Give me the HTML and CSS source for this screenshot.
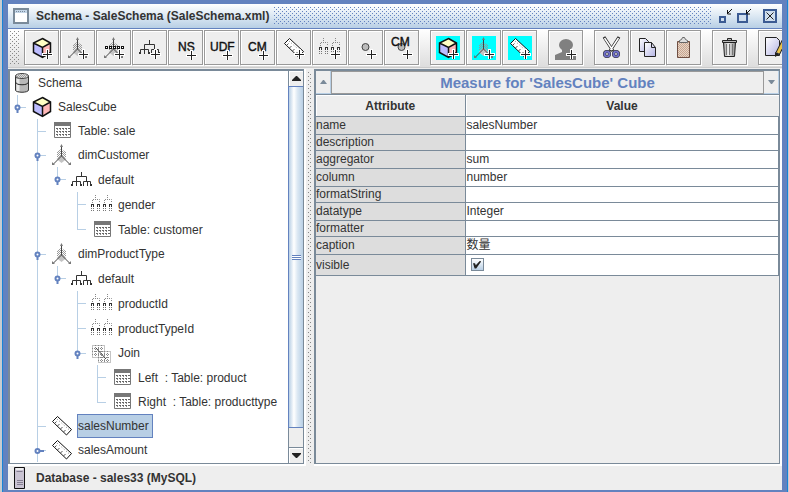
FILE: index.html
```html
<!DOCTYPE html>
<html lang="en">
<head>
<meta charset="utf-8">
<title>Schema - SaleSchema (SaleSchema.xml)</title>
<link rel="stylesheet" href="styles.css">
</head>
<body>
<svg class="defs" aria-hidden="true">
  <defs>
    <pattern id="dither" width="2" height="2" patternUnits="userSpaceOnUse"><path d="M0 0h1v1H0zM1 1h1v1H1z" fill="#999"/></pattern>
    <pattern id="dither-brown" width="2" height="2" patternUnits="userSpaceOnUse"><rect width="2" height="2" fill="#e6d5c8"/><path d="M0 0h1v1H0zM1 1h1v1H1z" fill="#c9a58e"/></pattern>
    <pattern id="bumps" width="4" height="4" patternUnits="userSpaceOnUse"><path d="M0 0h1v1H0zM2 2h1v1H2z" fill="#6382bf"/></pattern>
    <linearGradient id="steel"><stop offset="0" stop-color="#999"/><stop offset=".4" stop-color="#eee"/><stop offset="1" stop-color="#888"/></linearGradient>
    <linearGradient id="sheet" x2="1" y2="1"><stop offset="0" stop-color="#fff"/><stop offset="1" stop-color="#b4b4e4"/></linearGradient>
  </defs>
  <symbol id="plus" viewBox="0 0 24 24"><path d="M17.5 13v10M12 18.5h11" stroke="#fff" stroke-width="3"/><path d="M17.5 14v9M13 18.5h9" stroke="#222"/></symbol>
  <symbol id="cube" viewBox="0 0 24 24">
    <path d="M12.500 2.500 20.500 7 12.500 11.500 3.500 7z" fill="#ffffc4"/><path d="M3.500 7 12.500 11.500V21.500L3.500 16.500z" fill="#bcbcff"/><path d="M20.500 7 12.500 11.500V21.500L20.500 16.500z" fill="#ffb8b8"/>
    <path d="M12.500 2.500 20.500 7V16.500L12.500 21.500 3.500 16.500V7zM3.500 7 12.500 11.500 20.500 7M12.500 11.500V21" fill="none" stroke="#111" stroke-width="1.500"/>
  </symbol>
  <symbol id="dim" viewBox="0 0 24 24">
    <path d="M8 8l3-2 5 3v6H7V9z" fill="url(#dither)"/><path d="M11.500 12l5 4-5 4-5-4z" fill="#c4c4c4"/>
    <path d="M11.500 2v11M11.500 13l-8 8M11.500 13l8 8" fill="none" stroke="#444"/>
    <path d="M10 4l1.500-3L13 4zM2 19v3h3zM21 19v3h-3z" fill="#777"/>
  </symbol>
  <symbol id="hier" viewBox="0 0 24 24"><path d="M11.500 4v4M6.500 13V8.500h10V13M2.500 17v-3.500h8V17M6.500 13v4M13.500 17v-3.500h7V17M17.500 13v4" fill="none" stroke="#333"/><path d="M1 16h2v2H1zM6 16h1v2H6zM10 16h2v2h-2zM13 16h1v2h-1zM17 16h1v2h-1zM20 16h2v2h-2z" fill="#333"/></symbol>
  <symbol id="level" viewBox="0 0 24 24">
    <path d="M5.500 2v4M2.500 10V6.500h7V10M17.500 2v4M14.500 10V6.500h7V10" fill="none" stroke="#888" stroke-dasharray="1 1"/>
    <path d="M1.500 13v5M3.500 13v5M7.500 13v5M9.500 13v5M13.500 13v5M15.500 13v5M19.500 13v5M21.500 13v5" stroke="#777" stroke-dasharray="1 1"/>
    <path d="M1 11h3v3H1zM7 11h3v3H7zM13 11h3v3h-3zM19 11h3v3h-3z" fill="#333"/><path d="M2 12h1v2H2zM8 12h1v2H8zM14 12h1v2h-1zM20 12h1v2h-1z" fill="#fff"/>
  </symbol>
  <symbol id="ruler" viewBox="0 0 24 24"><path d="M7.500 2.500 21.500 15.500 16.500 21 2.500 7.500z" fill="#fff" stroke="#111"/><path d="M7 5l12.500 11" stroke="#888" stroke-dasharray="1 2"/><path d="M4.500 9.500l2-2M7.500 12l2-2M10.500 15l2-2M13.500 18l2-2" stroke="#555"/></symbol>
  <symbol id="grid" viewBox="0 0 24 24"><path d="M4.500 3.500h16v15h-16z" fill="#fff" stroke="#777"/><path d="M4 3h17v4H4z" fill="#777"/><path d="M6 9.500h14M6 12.500h14M6 15.500h14" stroke="#666" stroke-dasharray="2 1"/><path d="M7 10.500h12M7 13.500h12M7 16.500h12" stroke="#888" stroke-dasharray="1 2"/></symbol>
  <symbol id="join" viewBox="0 0 24 24"><path d="M2.500 4.500h12v12h-12zM5.500 4v12M8.500 4v12M11.500 4v12M2 7.500h12M2 10.500h12M2 13.500h12M8.500 10.500h12v11h-12zM11.500 10v12M14.500 10v12M17.500 10v12M8 13.500h12M8 16.500h12M8 19.500h12" fill="none" stroke="#888" stroke-dasharray="1 1"/><path d="M6 7l10 11" stroke="#444"/></symbol>
  <symbol id="database" viewBox="0 0 24 24"><path d="M5.500 5v14c0 3 13 3 13 0V5z" fill="#b8b8b8" stroke="#333"/><path d="M8 8v12" stroke="#e8e8e8" stroke-width="3"/><ellipse cx="12" cy="5" rx="6.500" ry="2.500" fill="#ddd" stroke="#444"/><ellipse cx="12" cy="5" rx="6" ry="2" fill="url(#dither)"/><path d="M6 11.500c0 3 12 3 12 0" fill="none" stroke="#222"/></symbol>
  <symbol id="ball" viewBox="0 0 24 24"><circle cx="11.500" cy="11" r="3.500" fill="#bbb" stroke="#444"/></symbol>
  <symbol id="open" viewBox="0 0 9 9"><path d="M4.500 4v5" stroke="#6382bf" stroke-width="2"/><circle cx="4.500" cy="3.500" r="2" fill="#fff" stroke="#6382bf" stroke-width="2"/></symbol>
  <symbol id="closed" viewBox="0 0 11 9"><path d="M4 4h6" stroke="#6382bf" stroke-width="2"/><circle cx="3.500" cy="4" r="2" fill="#fff" stroke="#6382bf" stroke-width="2"/></symbol>
</svg>

<div class="window">
  <header class="titlebar">
    <svg class="app-icon" viewBox="0 0 16 16"><rect x="1" y="1" width="14" height="14" fill="#fff" stroke="#7a8a99" stroke-width="2"/><path d="M2 2h12v3H2z" fill="#c4d6e8"/><path d="M3 3.500h10" stroke="#7a8a99" stroke-dasharray="1 1"/></svg>
    <h1>Schema - SaleSchema (SaleSchema.xml)</h1>
    <svg class="title-bumps" aria-hidden="true"><rect width="100%" height="100%" fill="url(#bumps)"/></svg>
    <div class="window-controls">
      <button aria-label="Minimize"><svg viewBox="0 0 16 16"><path d="M3 9h5v5H3z" fill="#cfdeee" stroke="#3b5b93" stroke-width="2"/><path d="M15 1L10.500 5.500M10.500 2v4H14" fill="none" stroke="#111"/></svg></button>
      <button aria-label="Maximize"><svg viewBox="0 0 16 16"><path d="M2 6h9v8H2z" fill="#cfdeee" stroke="#3b5b93" stroke-width="2"/><path d="M15 1L10.500 5.500M10.500 2v4H14" fill="none" stroke="#111"/></svg></button>
      <button class="close" aria-label="Close"><svg viewBox="0 0 16 16"><path d="M2 2h12v12H2z" fill="#cfdeee" stroke="#3b5b93" stroke-width="2"/><path d="M4.500 4.500l7 7M11.500 4.500l-7 7" stroke="#222"/></svg></button>
    </div>
  </header>

  <div class="toolbar" role="toolbar">
    <span class="grip"></span>
    <div class="group">
      <button aria-label="Add cube"><svg viewBox="0 0 24 24"><use href="#cube"/><use href="#plus"/></svg></button>
      <button aria-label="Add dimension"><svg viewBox="0 0 24 24"><use href="#dim"/><use href="#plus"/></svg></button>
      <button aria-label="Add dimension usage"><svg viewBox="0 0 24 24"><use href="#dim"/><path d="M3 11.500h19" stroke="#111" stroke-width="3" stroke-dasharray="3 1"/><path d="M4 11.500h17" stroke="#fff" stroke-dasharray="1 3"/><use href="#plus"/></svg></button>
      <button aria-label="Add hierarchy"><svg viewBox="0 0 24 24"><use href="#hier"/><use href="#plus"/></svg></button>
      <button aria-label="Add named set"><svg viewBox="0 0 24 24"><text x="4" y="15">NS</text><use href="#plus" y="1"/></svg></button>
      <button aria-label="Add user defined function"><svg viewBox="0 0 24 24"><text x="0" y="15">UDF</text><use href="#plus" y="1"/></svg></button>
      <button aria-label="Add calculated member"><svg viewBox="0 0 24 24"><text x="2" y="15">CM</text><use href="#plus" y="1"/></svg></button>
      <button aria-label="Add measure"><svg viewBox="0 0 24 24"><use href="#ruler"/><use href="#plus"/></svg></button>
      <button aria-label="Add level"><svg viewBox="0 0 24 24"><use href="#level"/><use href="#plus"/></svg></button>
      <button aria-label="Add property"><svg viewBox="0 0 24 24"><use href="#ball"/><use href="#plus"/></svg></button>
      <button aria-label="Add calculated member property"><svg viewBox="0 0 24 24"><use href="#ball"/><text x="1" y="10">CM</text><use href="#plus"/></svg></button>
    </div>
    <div class="group">
      <button class="virtual" aria-label="Add virtual cube"><svg viewBox="0 0 24 24"><use href="#cube"/><use href="#plus"/></svg></button>
      <button class="virtual" aria-label="Add virtual dimension"><svg viewBox="0 0 24 24"><use href="#dim"/><use href="#plus"/></svg></button>
      <button class="virtual" aria-label="Add virtual measure"><svg viewBox="0 0 24 24"><use href="#ruler"/><use href="#plus"/></svg></button>
    </div>
    <div class="group">
      <button aria-label="Add role"><svg viewBox="0 0 24 24"><path d="M8 13h8v3l6 2v6H1v-5l7-3z" fill="#808080"/><ellipse cx="12" cy="9" rx="7" ry="6" fill="#808080"/><use href="#plus"/></svg></button>
    </div>
    <div class="group">
      <button aria-label="Cut"><svg viewBox="0 0 24 24"><path d="M4 1l9 14M19 1l-9 14" stroke="#222" stroke-width="3"/><path d="M4.500 2l8 12M18.500 2l-8 12" stroke="#fff" stroke-width="1.500"/><circle cx="7" cy="18" r="2.500" fill="#ddd" stroke="#222" stroke-width="3"/><circle cx="16" cy="18" r="2.500" fill="#ddd" stroke="#222" stroke-width="3"/><circle cx="7" cy="18" r="2.500" fill="none" stroke="#7070c8" stroke-width="2"/><circle cx="16" cy="18" r="2.500" fill="none" stroke="#7070c8" stroke-width="2"/></svg></button>
      <button aria-label="Copy"><svg viewBox="0 0 24 24"><path d="M3.500 2.500h6l3 3v10h-9z" fill="url(#sheet)" stroke="#222"/><path d="M8.500 6.500h7l4 5v9h-11z" fill="url(#sheet)" stroke="#222"/><path d="M15.500 6.500v5h4" fill="none" stroke="#222"/></svg></button>
      <button aria-label="Paste"><svg viewBox="0 0 24 24"><path d="M5.500 5.500h12v16h-12z" fill="url(#dither-brown)" stroke="#6f4f42"/><path d="M7.500 6.500v-2l2-1 1-2h2l1 2 2 1v2z" fill="#ddd" stroke="#666"/></svg></button>
    </div>
    <div class="group">
      <button aria-label="Delete"><svg viewBox="0 0 24 24"><path d="M5.500 6.500h12l-1 14h-10z" fill="url(#steel)" stroke="#222"/><path d="M8.500 8v11M11.500 8v11M14.500 8v11" stroke="#777"/><path d="M4.500 4.500h14v2h-14zM9.500 4V2.500h4V4" fill="#bbb" stroke="#222"/></svg></button>
    </div>
    <div class="group">
      <button aria-label="Edit"><svg viewBox="0 0 24 24"><path d="M1.500 1.500h11l3 3v15h-14z" fill="url(#sheet)" stroke="#222"/><path d="M20 5L14 17" stroke="#222" stroke-width="5"/><path d="M20 5L14 17" stroke="#e8c24a" stroke-width="3"/><path d="M11 16l5 2-5 3z" fill="#222"/><path d="M18 4l4 2 1-3-3-1z" fill="#c44"/></svg></button>
    </div>
  </div>

  <main class="split">
    <section class="tree-pane">
      <ul class="tree">
        <li><div class="row"><svg class="icon"><use href="#database"/></svg><span class="label">Schema</span></div>
          <ul>
            <li><div class="row"><svg class="handle"><use href="#open"/></svg><svg class="icon"><use href="#cube"/></svg><span class="label">SalesCube</span></div>
              <ul>
                <li><div class="row"><svg class="icon"><use href="#grid"/></svg><span class="label">Table: sale</span></div></li>
                <li><div class="row"><svg class="handle"><use href="#open"/></svg><svg class="icon"><use href="#dim"/></svg><span class="label">dimCustomer</span></div>
                  <ul>
                    <li><div class="row tall"><svg class="handle"><use href="#open"/></svg><svg class="icon"><use href="#hier"/></svg><span class="label">default</span></div>
                      <ul>
                        <li><div class="row tall"><svg class="icon"><use href="#level"/></svg><span class="label">gender</span></div></li>
                        <li><div class="row tall"><svg class="icon"><use href="#grid"/></svg><span class="label">Table: customer</span></div></li>
                      </ul>
                    </li>
                  </ul>
                </li>
                <li><div class="row"><svg class="handle"><use href="#open"/></svg><svg class="icon"><use href="#dim"/></svg><span class="label">dimProductType</span></div>
                  <ul>
                    <li><div class="row tall"><svg class="handle"><use href="#open"/></svg><svg class="icon"><use href="#hier"/></svg><span class="label">default</span></div>
                      <ul>
                        <li><div class="row tall"><svg class="icon"><use href="#level"/></svg><span class="label">productId</span></div></li>
                        <li><div class="row tall"><svg class="icon"><use href="#level"/></svg><span class="label">productTypeId</span></div></li>
                        <li><div class="row"><svg class="handle"><use href="#open"/></svg><svg class="icon"><use href="#join"/></svg><span class="label">Join</span></div>
                          <ul>
                            <li><div class="row tall"><svg class="icon"><use href="#grid"/></svg><span class="label">Left&nbsp; : Table: product</span></div></li>
                            <li><div class="row"><svg class="icon"><use href="#grid"/></svg><span class="label">Right&nbsp; : Table: producttype</span></div></li>
                          </ul>
                        </li>
                      </ul>
                    </li>
                  </ul>
                </li>
                <li><div class="row"><svg class="icon"><use href="#ruler"/></svg><span class="label selected">salesNumber</span></div></li>
                <li class="more"><div class="row"><svg class="handle side"><use href="#closed"/></svg><svg class="icon"><use href="#ruler"/></svg><span class="label">salesAmount</span></div></li>
              </ul>
            </li>
          </ul>
        </li>
      </ul>
      <div class="scrollbar">
        <button class="arrow" aria-label="Scroll up"><svg viewBox="0 0 9 5"><path d="M4 0h1l4 4v1H0V4z"/></svg></button>
        <div class="thumb"><span></span></div>
        <div class="track"></div>
        <button class="arrow" aria-label="Scroll down"><svg viewBox="0 0 9 5"><path d="M0 0h9v1L5 5H4L0 1z"/></svg></button>
      </div>
    </section>
    <div class="divider"></div>
    <section class="detail-pane">
      <div class="detail-head">
        <button class="step" aria-label="Previous"><svg viewBox="0 0 7 4"><path d="M3 0h1l3 4H0z"/></svg></button>
        <button class="detail-title">Measure for 'SalesCube' Cube</button>
        <button class="step" aria-label="Next"><svg viewBox="0 0 7 4"><path d="M0 0h7L4 4H3z"/></svg></button>
      </div>
      <table>
        <thead><tr><th scope="col">Attribute</th><th scope="col">Value</th></tr></thead>
        <tbody>
          <tr><td>name</td><td>salesNumber</td></tr>
          <tr class="low"><td>description</td><td></td></tr>
          <tr><td>aggregator</td><td>sum</td></tr>
          <tr><td>column</td><td>number</td></tr>
          <tr class="low"><td>formatString</td><td></td></tr>
          <tr><td>datatype</td><td>Integer</td></tr>
          <tr class="low"><td>formatter</td><td></td></tr>
          <tr><td>caption</td><td>数量</td></tr>
          <tr class="check"><td><label for="visible">visible</label></td><td><input type="checkbox" id="visible" checked></td></tr>
        </tbody>
      </table>
    </section>
  </main>

  <footer class="status">
    <svg viewBox="0 0 11 22"><path d="M.5.5h10v21H.5z" fill="#c9c3d2" stroke="#111"/><path d="M2 1h7v2H2z" fill="#eee"/><path d="M2.500 4.500h6M3 13.500h6M3 15.500h6M3 17.500h6" stroke="#857f92"/></svg>
    <span>Database - sales33 (MySQL)</span>
  </footer>
</div>
</body>
</html>
```
FILE: styles.css
```css
* { box-sizing: border-box; }

:root {
  --frame: #6382bf;
  --line: #7a8a99;
  --panel: #eee;
  --select: #b8cfe5;
  --dot: conic-gradient(at 1px 1px, transparent 75%, #888 0);
}

body {
  margin: 0;
  height: 100vh;
  padding: 0 1px 0 2px;
  overflow: hidden;
  background: #c8ccd0;
  color: #333;
  font: 12px/14px "Liberation Sans", "Noto Sans CJK SC", sans-serif;
}

button { margin: 0; padding: 0; border: 0; background: none; font: inherit; color: inherit; }
svg { display: block; flex: none; }
ul { list-style: none; margin: 0; padding: 0; }
.defs { position: absolute; width: 0; height: 0; }

.window {
  height: 100%;
  display: flex;
  flex-direction: column;
  padding: 4px 5px 2px;
  border: solid #1883d7;
  border-width: 0 1px;
  background: var(--frame);
}

/* Title bar */
.titlebar {
  flex: none;
  display: flex;
  align-items: center;
  height: 24px;
  padding: 0 4px 0 5px;
  background: linear-gradient(#fff, #dce8f3 50%, #b8cfe5);
}
.app-icon { width: 16px; height: 16px; }
.titlebar h1 { margin: 0 5px 0 7px; font-size: 12px; white-space: nowrap; }
.title-bumps { flex: 1; min-width: 0; height: 18px; }
.window-controls { display: flex; gap: 3px; margin-left: 5px; }
.window-controls svg { width: 16px; height: 16px; }
.window-controls .close { margin-left: 7px; }

/* Toolbar */
.toolbar {
  flex: none;
  display: flex;
  gap: 11px;
  height: 39px;
  margin-top: 1px;
  padding-top: 1px;
  overflow: hidden;
  border-bottom: 1px solid #ccc;
  background: linear-gradient(#fff, #ddd);
}
.grip {
  flex: none;
  width: 10px;
  margin: 1px -7px 3px 2px;
  background: var(--dot) 0 0 / 4px 4px, var(--dot) 2px 2px / 4px 4px;
}
.group { flex: none; display: flex; gap: 1px; }
.group button {
  width: 35px;
  height: 35px;
  padding: 5px 4px 4px 5px;
  border: 1px solid #999;
  background: var(--panel);
  box-shadow: inset 1px 1px #fff, 1px 1px #fff;
}
.group svg { width: 24px; height: 24px; overflow: visible; }
.group text { font-size: 12px; fill: #111; stroke: #111; stroke-width: 0.4px; }
.virtual svg { background: #0ff; }

/* Split area */
.split { flex: 1; min-height: 0; display: flex; padding-top: 1px; background: var(--panel); }
.tree-pane {
  flex: none;
  width: 298px;
  display: flex;
  overflow: hidden;
  border: solid #fff;
  border-width: 0 2px 2px 0;
  box-shadow: inset 2px 2px var(--line), inset -1px -1px var(--line);
}
.tree { flex: 1; min-width: 0; margin: 2px 0 1px 2px; overflow: hidden; background: #fff; }
.tree ul { padding-left: 20px; }
.tree li { position: relative; }
.row { display: flex; align-items: center; gap: 3px; height: 24px; position: relative; }
.row.tall { height: 25px; }
.icon { width: 24px; height: 24px; }
.label { padding: 4px 3px 4px 0; border: 1px solid transparent; white-space: nowrap; }
.label.selected { border-color: var(--frame); background: var(--select); }

/* Guide lines joining a node to its siblings */
.tree ul > li::before {
  content: "";
  position: absolute;
  left: -13px;
  top: 0;
  height: 100%;
  border-left: 1px solid var(--select);
}
.tree ul > li:last-child::before { height: 13px; }
.tree ul > li.more::before { height: 100%; }
.tree ul > li::after {
  content: "";
  position: absolute;
  left: -12px;
  top: 12px;
  width: 8px;
  border-top: 1px solid var(--select);
}
.handle { position: absolute; z-index: 1; left: -17px; top: 9px; width: 9px; height: 9px; }
.handle.side { width: 11px; left: -16px; }

/* Scroll bar */
.scrollbar {
  flex: none;
  display: flex;
  flex-direction: column;
  width: 16px;
  margin: 2px 0 1px;
  border: solid var(--line);
  border-width: 0 1px;
  background: var(--panel);
}
.arrow { display: grid; place-items: center; height: 15px; box-shadow: inset 1px 1px #fff; }
.arrow svg { width: 9px; height: 5px; fill: #222; }
.thumb {
  flex: 1;
  display: grid;
  place-items: center;
  border: solid var(--frame);
  border-width: 1px 0 1px 1px;
  margin-left: -1px;
  background: linear-gradient(90deg, #b8cfe5, #fff 35%, #dce8f3 60%, #b8cfe5);
}
.thumb span { width: 9px; height: 5px; background: repeating-linear-gradient(var(--frame) 0 1px, #fff 1px 2px); }
.track { height: 20px; border-bottom: 1px solid var(--line); }

.divider {
  flex: none;
  width: 4px;
  margin: 3px 2px;
  background: var(--dot) 0 0 / 4px 4px, var(--dot) 2px 2px / 4px 4px;
}

/* Detail pane */
.detail-pane {
  flex: 1;
  min-width: 0;
  border: solid #fff;
  border-width: 0 2px 2px 0;
  box-shadow: inset 2px 2px var(--line), inset -1px -1px var(--line);
  padding: 2px 1px 1px 2px;
}
.detail-head { display: flex; height: 23px; background: #fff; }
.step { display: grid; place-items: center; width: 15px; background: var(--panel); border: solid var(--select); border-width: 0 1px 1px 0; }
.step svg { width: 7px; height: 4px; fill: var(--line); }
.detail-title {
  flex: 1;
  border: 1px solid #999;
  background: var(--panel);
  color: var(--frame);
  font-size: 15px;
  font-weight: bold;
}
table { width: 100%; border-collapse: collapse; table-layout: fixed; border-top: 1px solid var(--line); }
th { height: 22px; padding: 0; border-bottom: 1px solid var(--line); box-shadow: inset 1px 1px #fff; }
th:first-child { width: 149px; border-right: 1px solid var(--line); }
td { height: 18px; padding: 0; line-height: 16px; vertical-align: top; background: #fff; border: 1px solid var(--line); border-left: 0; }
td:first-child { background: #ddd; }
td + td { padding-left: 1px; }
.low td { height: 16px; line-height: 14px; }
.check td { height: 21px; line-height: 20px; }
.check input {
  appearance: none;
  display: grid;
  place-items: center;
  width: 13px;
  height: 13px;
  margin: 3px 4px;
  border: 1px solid var(--line);
  background: linear-gradient(#fff, var(--select));
}
.check input:checked::before {
  content: "";
  width: 8px;
  height: 8px;
  background: #222;
  clip-path: polygon(0 35%, 25% 35%, 35% 60%, 90% 0, 100% 15%, 40% 100%, 20% 100%);
}

/* Status bar */
.status {
  flex: none;
  display: flex;
  align-items: center;
  gap: 11px;
  height: 24px;
  padding-left: 6px;
  background: var(--panel);
  font-weight: bold;
}
.status svg { width: 11px; height: 22px; }
```
